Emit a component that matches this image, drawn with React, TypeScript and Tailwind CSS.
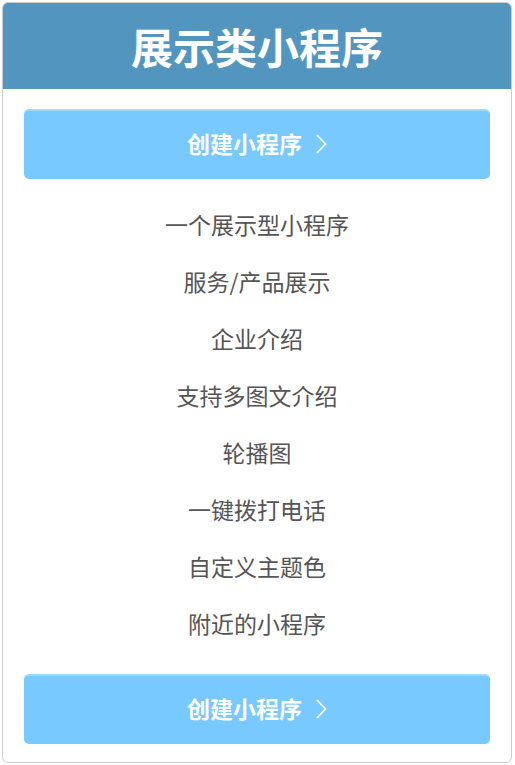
import React from 'react';

const features = [
  '一个展示型小程序',
  '服务/产品展示',
  '企业介绍',
  '支持多图文介绍',
  '轮播图',
  '一键拨打电话',
  '自定义主题色',
  '附近的小程序',
];

const CreateButton: React.FC = () => (
  <button className="w-full h-[70px] bg-[#77c9ff] border-t-2 border-[#9fd8ff] rounded-[5px] flex items-center justify-center gap-[14px] pb-[3px] text-white text-[23px] font-bold">
    <span>创建小程序</span>
    <svg width="11" height="20" viewBox="0 0 11 20" fill="none">
      <polyline points="1,1 9.5,10 1,19" stroke="white" strokeWidth="1.8" />
    </svg>
  </button>
);

export default function App() {
  return (
    <div
      className="w-[515px] h-[765px] bg-white p-[2px] pr-[3px]"
      style={{ fontFamily: '"Noto Sans CJK SC", "Noto Sans", sans-serif' }}
    >
      <div className="h-full border border-[#cccccc] rounded-[6px] overflow-hidden flex flex-col">
        <div className="h-[86px] bg-[#5296bf] flex items-center justify-center">
          <h1 className="text-white text-[42px] font-bold leading-none">展示类小程序</h1>
        </div>
        <div className="px-[21px] pt-[20px]">
          <CreateButton />
          <ul className="pt-[17px] pb-[22px]">
            {features.map((f) => (
              <li key={f} className="h-[57px] flex items-center justify-center text-[23px] text-[#555555]">
                {f}
              </li>
            ))}
          </ul>
          <CreateButton />
        </div>
      </div>
    </div>
  );
}
